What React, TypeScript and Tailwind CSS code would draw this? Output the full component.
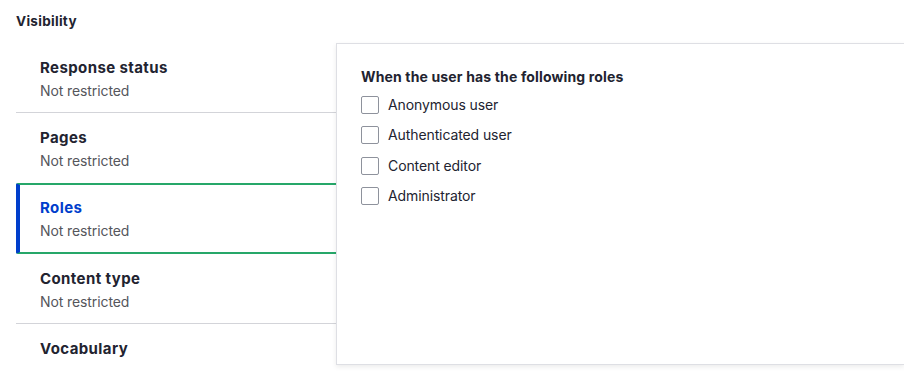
import React from "react";

const tabs = [
  { title: "Response status", sub: "Not restricted" },
  { title: "Pages", sub: "Not restricted" },
  { title: "Roles", sub: "Not restricted", active: true },
  { title: "Content type", sub: "Not restricted" },
  { title: "Vocabulary", sub: "" },
];

const roles = ["Anonymous user", "Authenticated user", "Content editor", "Administrator"];

export default function App() {
  return (
    <div
      className="w-[904px] h-[384px] overflow-hidden bg-white text-[#222330]"
      style={{ fontFamily: "Inter, 'Noto Sans', sans-serif" }}
    >
      <div className="pl-4 pt-[13px] text-[13.5px] font-bold leading-[16px] tracking-[0.3px]">Visibility</div>
      <div className="flex mt-[14px] pl-4">
        <div className="w-[320px] shrink-0 flex flex-col">
          {tabs.map((t, i) => {
            const next = tabs[i + 1];
            const showSep = !t.active && next && !next.active;
            return (
              <div
                key={t.title}
                className={
                  "flex flex-col " +
                  (t.active
                    ? "h-[71px] border-t-2 border-b-2 border-l-4 border-[#26a769] border-l-[#003ecc] rounded-l-[2px] pl-5 pt-[13px]"
                    : showSep
                    ? "h-[70px] border-b border-[#d3d4d9] pl-6 pt-[15px]"
                    : "h-[70px] pl-6 pt-[15px]")
                }
              >
                <div
                  className={
                    "text-[15px] font-bold leading-[20px] tracking-[0.4px] " +
                    (t.active ? "text-[#003ecc]" : "text-[#222330]")
                  }
                >
                  {t.title}
                </div>
                {t.sub && (
                  <div className="text-[14px] leading-[20px] mt-[3px] text-[#55565b] tracking-[-0.1px]">{t.sub}</div>
                )}
              </div>
            );
          })}
        </div>
        <div className="flex-1 h-[322px] border-l border-t border-b border-[#dedfe4] shadow-[0_2px_5px_rgba(0,0,0,0.08)] pl-6 pt-[24px]">
          <div className="text-[14px] font-bold leading-[18px] tracking-[0.15px] mb-[4px]">
            When the user has the following roles
          </div>
          <div className="flex flex-col">
            {roles.map((r) => (
              <label key={r} className="flex items-center h-[30.3px] gap-[9px]">
                <span className="w-[18px] h-[18px] border border-[#8e929c] rounded-[2px] bg-white" />
                <span className="text-[14px] leading-[18px] text-[#222330] tracking-[-0.1px]">{r}</span>
              </label>
            ))}
          </div>
        </div>
      </div>
    </div>
  );
}
